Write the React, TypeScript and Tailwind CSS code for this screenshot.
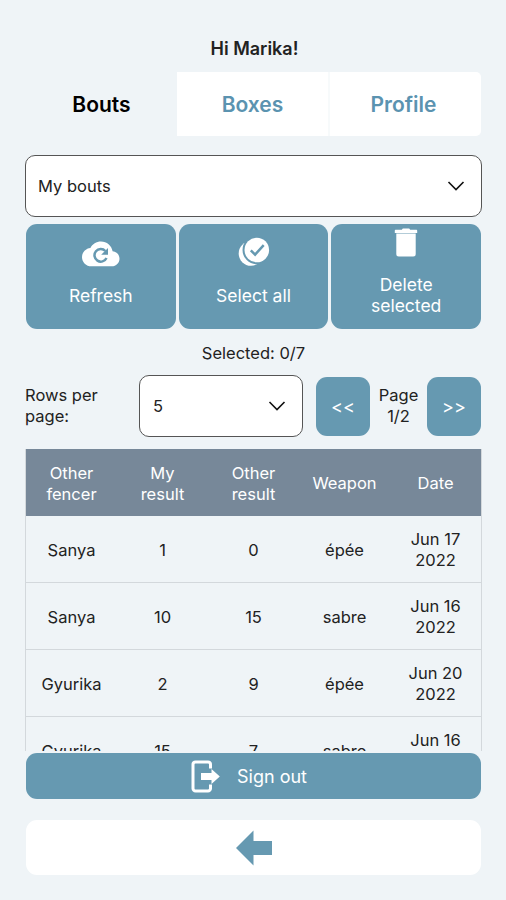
import type { ReactNode } from "react";

const bouts = [
  { fencer: "Sanya", mine: 1, other: 0, weapon: "épée", date: "Jun 17 2022" },
  { fencer: "Sanya", mine: 10, other: 15, weapon: "sabre", date: "Jun 16 2022" },
  { fencer: "Gyurika", mine: 2, other: 9, weapon: "épée", date: "Jun 20 2022" },
  { fencer: "Gyurika", mine: 15, other: 7, weapon: "sabre", date: "Jun 16 2022" },
];

const headers = ["Other fencer", "My result", "Other result", "Weapon", "Date"];

function Chevron() {
  return (
    <svg width="18" height="12" viewBox="0 0 18 12" fill="none" stroke="#111" strokeWidth="1.6">
      <path d="M1.5 2 9 9.5 16.5 2" />
    </svg>
  );
}

function CloudRefresh() {
  return (
    <svg width="38" height="26" viewBox="0 0 38 26">
      <path
        fill="#fff"
        d="M30.6 10.3C29.6 4.6 24.8.5 19 .5c-4.6 0-8.6 2.6-10.6 6.5C3.6 7.5 0 11.5 0 16.2c0 5.100 4.200 9.100 9.400 9.100h20.400c4.300 0 7.700-3.400 7.700-7.600 0-4-3-7.200-6.900-7.400Z"
      />
      <path fill="none" stroke="#6699b1" strokeWidth="2.5" d="M24.500 17A6.300 6.300 0 1 1 23.400 10" />
      <path fill="#6699b1" d="M26 7v6.800H19.200Z" />
    </svg>
  );
}

function SelectAllIcon() {
  return (
    <svg width="32" height="30" viewBox="0 0 32 30" fill="none">
      <circle cx="13" cy="16.500" r="12.3" fill="#fff" />
      <circle cx="18.800" cy="13" r="14.300" fill="#6699b1" />
      <circle cx="18.800" cy="13" r="12.300" fill="#fff" />
      <path stroke="#6699b1" strokeWidth="2.500" d="m12.800 13.300 4.300 4.300 8.600-9.400" />
    </svg>
  );
}

function TrashIcon() {
  return (
    <svg width="24" height="30" viewBox="0 0 24 30" fill="#fff">
      <path d="M1.800 1.700h6l1-1.200h6.400l1 1.200h6c.6 0 1 .4 1 1V5H.8V2.700c0-.6.400-1 1-1Z" />
      <path d="M2.300 5.600h19.400v20.400a2.500 2.500 0 0 1-2.500 2.500H4.800a2.500 2.500 0 0 1-2.500-2.500Z" />
    </svg>
  );
}

function SignOutIcon() {
  return (
    <svg width="29" height="33" viewBox="0 0 29 33" fill="none">
      <path
        stroke="#fff"
        strokeWidth="3"
        d="M19.500 8.500V4.500a2.500 2.500 0 0 0-2.500-2.500H4.500A2.500 2.500 0 0 0 2 4.500v24A2.500 2.500 0 0 0 4.500 31H17a2.500 2.500 0 0 0 2.500-2.500V24.500"
      />
      <path fill="#fff" d="M10 13h10.500V9L28.800 16.500l-8.300 7.500v-4H10Z" />
    </svg>
  );
}

function ActionButton({ icon, label }: { icon: ReactNode; label: string }) {
  return (
    <button className="flex flex-1 flex-col items-center justify-between rounded-[11px] bg-[#6699b1] pb-[13px] text-[17.5px] text-white">
      {icon}
      <span className="flex h-[42px] w-24 items-center justify-center">{label}</span>
    </button>
  );
}

export default function App() {
  return (
    <main className="flex h-[900px] w-[506px] flex-col bg-[#eff4f7] pr-[25px] pl-[26px] font-['Inter',sans-serif] text-[16.5px] leading-[21px] text-[#222]">
      <h1 className="mt-[38px] pl-0.5 text-center text-[18px] font-semibold">Hi Marika!</h1>

      <nav className="mt-[13px] flex h-16 shrink-0 text-[21px] font-semibold text-[#5b93b0]">
        <button className="w-[151px] text-black">Bouts</button>
        <button className="w-[153px] border-r-2 border-[#f7fafb] bg-white">Boxes</button>
        <button className="flex-1 rounded-r-[5px] bg-white pr-1">Profile</button>
      </nav>

      <div className="-mx-px mt-[19px] flex h-[62px] shrink-0 items-center justify-between rounded-[10px] border border-[#555] bg-white pr-4 pl-3">
        My bouts
        <Chevron />
      </div>

      <div className="mt-[7px] flex h-[105px] shrink-0 gap-[3px]">
        <ActionButton icon={<span className="mt-[17px]"><CloudRefresh /></span>} label="Refresh" />
        <ActionButton icon={<span className="mt-[13px]"><SelectAllIcon /></span>} label="Select all" />
        <ActionButton icon={<span className="mt-1"><TrashIcon /></span>} label="Delete selected" />
      </div>

      <p className="mt-[14px] text-center">Selected: 0/7</p>

      <div className="mt-[11px] flex h-[62px] shrink-0 items-center">
        <span className="-ml-px w-[114px] pr-8">Rows per page:</span>
        <div className="flex h-[62px] w-[164px] items-center justify-between rounded-[10px] border border-[#555] bg-white pr-4 pl-[13px]">
          5
          <Chevron />
        </div>
        <button className="ml-[13px] h-[59px] w-[54px] rounded-[11px] bg-[#6699b1] text-[18px] text-white">&lt;&lt;</button>
        <span className="w-[57px] px-2 text-center">Page 1/2</span>
        <button className="h-[59px] w-[54px] rounded-[11px] bg-[#6699b1] text-[18px] text-white">&gt;&gt;</button>
      </div>

      <div className="-mx-px mt-3 h-[302px] shrink-0 overflow-hidden border-x border-[#d3d8dc] text-center">
        <div className="grid h-[67px] grid-cols-5 items-center bg-[#778899] pt-0.5 text-white">
          {headers.map((header) => (
            <span key={header} className="px-3">{header}</span>
          ))}
        </div>
        {bouts.map((bout, i) => (
          <div key={i} className="grid h-[67px] grid-cols-5 items-center border-b border-[#d3d8dc] pt-0.5">
            <span>{bout.fencer}</span>
            <span>{bout.mine}</span>
            <span>{bout.other}</span>
            <span>{bout.weapon}</span>
            <span className="px-4">{bout.date}</span>
          </div>
        ))}
      </div>

      <button className="mt-[2px] flex h-[46px] shrink-0 items-center justify-center gap-[17px] rounded-[11px] bg-[#6699b1] pr-[9px] text-[18px] text-white">
        <SignOutIcon />
        Sign out
      </button>

      <button className="mt-[21px] flex h-[55px] shrink-0 items-center justify-center rounded-[11px] bg-white">
        <svg width="36" height="36" viewBox="0 0 36 36">
          <path fill="#6699b1" d="M0 18 17.500 0.500V11H36v14H17.500v10.500Z" />
        </svg>
      </button>
    </main>
  );
}
